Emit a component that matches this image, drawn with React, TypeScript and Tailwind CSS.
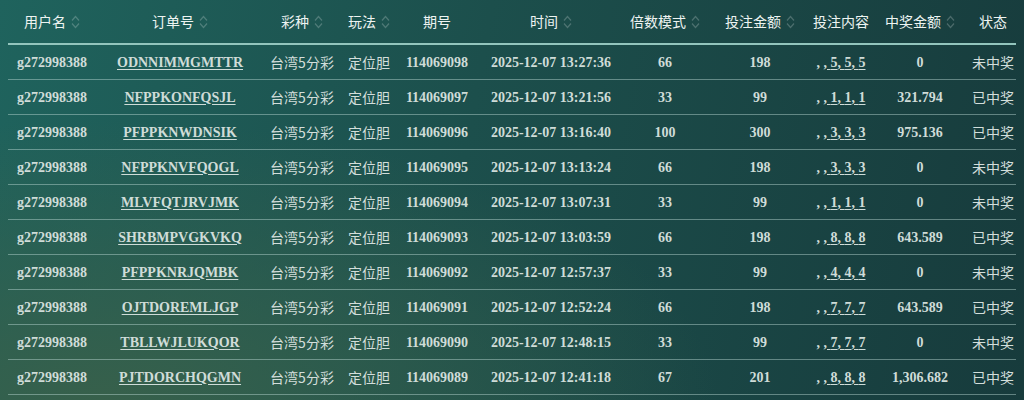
import React from "react";

type Row = {
  user: string;
  order: string;
  issue: string;
  time: string;
  multiple: string;
  amount: string;
  digit: string;
  prize: string;
  status: string;
};

const rows: Row[] = [
  { user: "g272998388", order: "ODNNIMMGMTTR", issue: "114069098", time: "2025-12-07 13:27:36", multiple: "66", amount: "198", digit: "5", prize: "0", status: "未中奖" },
  { user: "g272998388", order: "NFPPKONFQSJL", issue: "114069097", time: "2025-12-07 13:21:56", multiple: "33", amount: "99", digit: "1", prize: "321.794", status: "已中奖" },
  { user: "g272998388", order: "PFPPKNWDNSIK", issue: "114069096", time: "2025-12-07 13:16:40", multiple: "100", amount: "300", digit: "3", prize: "975.136", status: "已中奖" },
  { user: "g272998388", order: "NFPPKNVFQOGL", issue: "114069095", time: "2025-12-07 13:13:24", multiple: "66", amount: "198", digit: "3", prize: "0", status: "未中奖" },
  { user: "g272998388", order: "MLVFQTJRVJMK", issue: "114069094", time: "2025-12-07 13:07:31", multiple: "33", amount: "99", digit: "1", prize: "0", status: "未中奖" },
  { user: "g272998388", order: "SHRBMPVGKVKQ", issue: "114069093", time: "2025-12-07 13:03:59", multiple: "66", amount: "198", digit: "8", prize: "643.589", status: "已中奖" },
  { user: "g272998388", order: "PFPPKNRJQMBK", issue: "114069092", time: "2025-12-07 12:57:37", multiple: "33", amount: "99", digit: "4", prize: "0", status: "未中奖" },
  { user: "g272998388", order: "OJTDOREMLJGP", issue: "114069091", time: "2025-12-07 12:52:24", multiple: "66", amount: "198", digit: "7", prize: "643.589", status: "已中奖" },
  { user: "g272998388", order: "TBLLWJLUKQOR", issue: "114069090", time: "2025-12-07 12:48:15", multiple: "33", amount: "99", digit: "7", prize: "0", status: "未中奖" },
  { user: "g272998388", order: "PJTDORCHQGMN", issue: "114069089", time: "2025-12-07 12:41:18", multiple: "67", amount: "201", digit: "8", prize: "1,306.682", status: "已中奖" },
];

const headers: { label: string; sort: boolean }[] = [
  { label: "用户名", sort: true },
  { label: "订单号", sort: true },
  { label: "彩种", sort: true },
  { label: "玩法", sort: true },
  { label: "期号", sort: false },
  { label: "时间", sort: true },
  { label: "倍数模式", sort: true },
  { label: "投注金额", sort: true },
  { label: "投注内容", sort: false },
  { label: "中奖金额", sort: true },
  { label: "状态", sort: false },
];

const cols =
  "grid grid-cols-[88px_168px_76px_58px_78px_150px_78px_112px_50px_108px_38px]";

function SortIcon() {
  return (
    <svg width="9" height="16" viewBox="0 0 9 16" fill="none" className="shrink-0">
      <path d="M1 6.5 L4.5 2.5 L8 6.5" stroke="rgba(255,255,255,0.22)" strokeWidth="1.2" />
      <path d="M1 9.5 L4.5 13.5 L8 9.5" stroke="rgba(255,255,255,0.22)" strokeWidth="1.2" />
    </svg>
  );
}

const cell = "flex items-center justify-center whitespace-nowrap";
const latin = "font-['Liberation_Serif',serif] font-bold text-[14px] text-[#cfdcd8]";
const cjk = "font-['Noto_Sans_CJK_SC',sans-serif] text-[14px] text-[#d3dedb]";

export default function App() {
  return (
    <div className="h-[400px] w-[1024px] overflow-hidden bg-[radial-gradient(ellipse_60%_70%_at_10%_100%,#37604b_0%,rgba(55,96,75,0)_100%),linear-gradient(100deg,#1f635d_0%,#1c4f4c_45%,#173b3c_100%)] px-[8px]">
      <div className={`${cols} h-[45px] border-b-2 border-[#93c5bd]`}>
        {headers.map((h) => (
          <div key={h.label} className={`${cell} gap-[5px] font-['Noto_Sans_CJK_SC',sans-serif] text-[14px] text-[#eef4f2]`}>
            <span>{h.label}</span>
            {h.sort && <SortIcon />}
          </div>
        ))}
      </div>
      {rows.map((r) => (
        <div key={r.order} className={`${cols} h-[35px] border-b border-[rgba(190,220,214,0.45)]`}>
          <div className={`${cell} ${latin}`}>{r.user}</div>
          <div className={`${cell} ${latin}`}>
            <span className="underline underline-offset-2">{r.order}</span>
          </div>
          <div className={`${cell} ${cjk}`}>台湾5分彩</div>
          <div className={`${cell} ${cjk}`}>定位胆</div>
          <div className={`${cell} ${latin}`}>{r.issue}</div>
          <div className={`${cell} ${latin}`}>{r.time}</div>
          <div className={`${cell} ${latin}`}>{r.multiple}</div>
          <div className={`${cell} ${latin}`}>{r.amount}</div>
          <div className={`${cell} ${latin}`}>
            <span>, ,</span>
            <span className="underline underline-offset-2">
              &nbsp;{r.digit}, {r.digit}, {r.digit}
            </span>
          </div>
          <div className={`${cell} ${latin}`}>{r.prize}</div>
          <div className={`${cell} ${cjk}`}>{r.status}</div>
        </div>
      ))}
    </div>
  );
}
